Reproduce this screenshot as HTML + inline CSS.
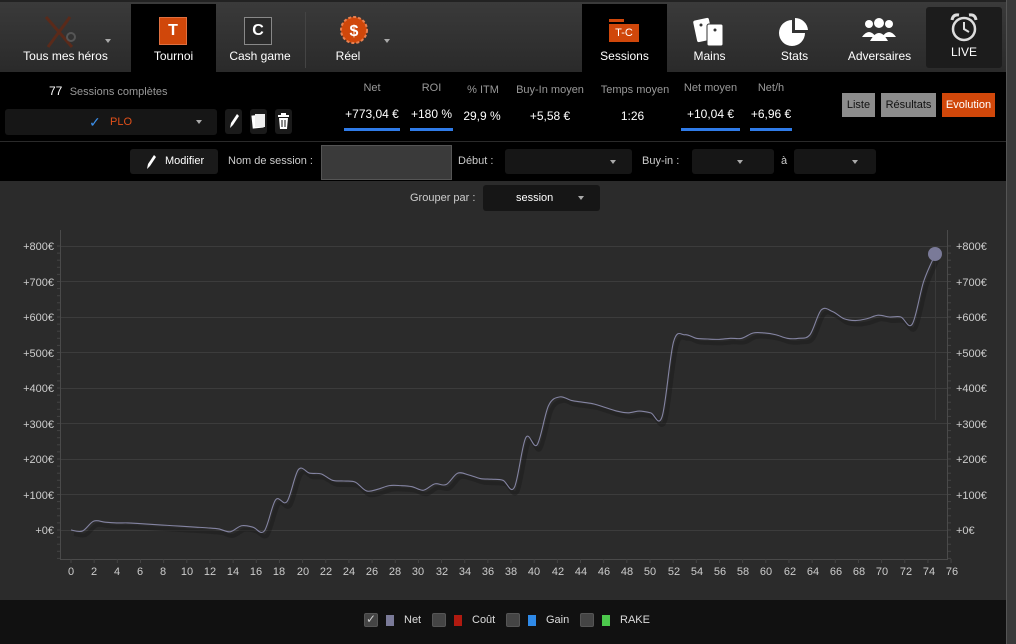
<!DOCTYPE html>
<html><head><meta charset="utf-8"><style>
*{margin:0;padding:0;box-sizing:border-box}
body{width:1016px;height:644px;overflow:hidden;background:#2b2b2b;font-family:"Liberation Sans",sans-serif;font-size:12px;color:#ddd;position:relative}
.a{position:absolute}
.nav{left:0;top:0;width:1006px;height:72px;background:linear-gradient(#3a3a3a,#2a2a2a);border-top:2px solid #222}
.tab{position:absolute;top:2px;height:70px;text-align:center;color:#fff;font-size:12px}
.tab .l{position:absolute;bottom:11px;left:0;right:0}
.blk{background:#000}
.dd{position:absolute;width:0;height:0;border-left:3px solid transparent;border-right:3px solid transparent;border-top:4px solid #aaa}
.stats{left:0;top:72px;width:1006px;height:69px;background:#000}
.filt{left:0;top:141px;width:1006px;height:40px;background:#000;border-top:1px solid #2a2a2a}
.h{position:absolute;color:#999;font-size:11px;text-align:center}
.v{position:absolute;color:#fff;font-size:12px;text-align:center}
.bar{position:absolute;height:3px;background:#2f7be8}
.sel{position:absolute;background:#161616;border-radius:3px}
.btn{position:absolute;top:93px;height:24px;line-height:24px;font-size:11px;color:#111;background:#8c8c8c;text-align:center}
.leg{left:0;top:600px;width:1006px;height:44px;background:#111}
.cb{position:absolute;top:613px;width:14px;height:14px;background:#444;border:1px solid #555;border-radius:2px}
.sw{position:absolute;top:615px;width:8px;height:11px}
.lt{position:absolute;top:614px;font-size:11px;color:#ddd}
</style></head><body>
<div class="a" style="left:1006px;top:0;width:10px;height:644px;background:#3a3a3a;border-left:1px solid #555"></div>
<div class="a nav">
 <div class="tab" style="left:0;width:131px">
  <svg class="a" style="left:44px;top:11px" width="32" height="34" viewBox="0 0 32 34"><path d="M2 2 L28 32 M26 2 L4 32" stroke="#5a2a1a" stroke-width="3"/><circle cx="27" cy="22" r="4" fill="none" stroke="#555" stroke-width="2"/></svg>
  <div class="dd" style="left:105px;top:35px"></div><div class="l">Tous mes héros</div></div>
 <div class="tab blk" style="left:131px;width:85px">
  <div class="a" style="left:28px;top:13px;width:28px;height:28px;background:#d0470a;border:1px solid #e07040;color:#fff;font-weight:bold;font-size:16px;line-height:26px">T</div><div class="l">Tournoi</div></div>
 <div class="tab" style="left:216px;width:88px">
  <div class="a" style="left:28px;top:13px;width:28px;height:28px;background:#2a2a2a;border:1px solid #888;color:#fff;font-weight:bold;font-size:16px;line-height:26px">C</div><div class="l">Cash game</div></div>
 <div class="a" style="left:305px;top:10px;width:1px;height:56px;background:#444"></div>
 <div class="tab" style="left:306px;width:100px">
  <svg class="a" style="left:34px;top:12px" width="28" height="28"><circle cx="14" cy="14" r="13" fill="#d0470a" stroke="#e88050" stroke-dasharray="3 2" stroke-width="2"/><text x="14" y="20" text-anchor="middle" fill="#fff" font-size="16" font-weight="bold" font-family="Liberation Sans">$</text></svg>
  <div class="dd" style="left:78px;top:35px"></div><div class="l" style="left:-8px;right:auto;width:100px">Réel</div></div>
 <div class="tab blk" style="left:582px;width:85px">
  <div class="a" style="left:27px;top:15px;width:15px;height:3px;background:#d0470a"></div>
  <div class="a" style="left:27px;top:20px;width:30px;height:18px;background:#d0470a;color:#fff;font-size:11px;line-height:18px">T-C</div><div class="l">Sessions</div></div>
 <div class="tab" style="left:667px;width:85px">
  <svg class="a" style="left:26px;top:12px" width="34" height="32"><rect x="2" y="3" width="16" height="22" rx="2" fill="#fff" transform="rotate(-12 10 14)"/><rect x="14" y="8" width="16" height="22" rx="2" fill="#fff" stroke="#333"/><circle cx="8" cy="9" r="1.5" fill="#333"/><circle cx="22" cy="14" r="1.5" fill="#333"/></svg>
  <div class="l">Mains</div></div>
 <div class="tab" style="left:752px;width:85px">
  <svg class="a" style="left:26px;top:12px" width="32" height="32"><path d="M14 4 A13 13 0 1 0 27 17 L14 17 Z" fill="#fff"/><path d="M17 2 A13 13 0 0 1 30 14 L17 14 Z" fill="#fff"/></svg>
  <div class="l">Stats</div></div>
 <div class="tab" style="left:837px;width:85px">
  <svg class="a" style="left:24px;top:13px" width="36" height="26"><circle cx="8" cy="7" r="4" fill="#fff"/><circle cx="28" cy="7" r="4" fill="#fff"/><circle cx="18" cy="6" r="5" fill="#fff"/><path d="M1 20 Q8 10 15 20 Z M21 20 Q28 10 35 20 Z" fill="#fff"/><path d="M9 24 Q18 8 27 24 Z" fill="#fff"/></svg>
  <div class="l">Adversaires</div></div>
 <div class="tab" style="left:926px;top:5px;width:76px;height:61px;background:#1c1c1c;border-radius:3px">
  <svg class="a" style="left:23px;top:5px" width="30" height="30"><circle cx="15" cy="17" r="11" fill="none" stroke="#ddd" stroke-width="2.5"/><path d="M15 10 V17 L20 20" stroke="#ddd" stroke-width="2" fill="none"/><path d="M3 8 Q4 2 10 3 M27 8 Q26 2 20 3" stroke="#ddd" stroke-width="3" fill="none"/></svg>
  <div class="l" style="bottom:9px">LIVE</div></div>
</div>

<div class="a stats">
 <div class="a" style="left:49px;top:12px;font-size:12px;color:#fff">77 <span style="color:#999;font-size:11px;margin-left:4px">Sessions complètes</span></div>
 <div class="sel" style="left:5px;top:37px;width:212px;height:26px"><span class="a" style="left:84px;top:5px;color:#3b8ee8;font-size:14px">✓</span><span class="a" style="left:105px;top:7px;color:#e0501a;font-size:11px">PLO</span><div class="dd" style="left:191px;top:11px"></div></div>
 <div class="sel" style="left:225px;top:37px;width:17px;height:25px;background:#1a1a1a"><svg width="17" height="25"><path d="M5 19 L6 14 L12 5 L14 7 L8 16 Z" fill="#fff"/></svg></div>
 <div class="sel" style="left:250px;top:37px;width:17px;height:25px;background:#1a1a1a"><svg width="17" height="25"><rect x="2" y="6" width="11" height="13" fill="#fff" transform="rotate(-6 8 12)"/><rect x="5" y="5" width="10" height="13" fill="#eee"/></svg></div>
 <div class="sel" style="left:275px;top:37px;width:17px;height:25px;background:#1a1a1a"><svg width="17" height="25"><rect x="3" y="6" width="11" height="2" fill="#fff"/><rect x="6" y="4" width="5" height="2" fill="#fff"/><path d="M4 9 H13 L12 20 H5 Z" fill="#fff"/><path d="M7 11 V18 M10 11 V18" stroke="#111"/></svg></div>
 <div class="h" style="left:344px;top:10px;width:56px">Net</div><div class="v" style="left:340px;top:35px;width:64px">+773,04 €</div><div class="bar" style="left:344px;top:56px;width:56px"></div>
 <div class="h" style="left:410px;top:10px;width:43px">ROI</div><div class="v" style="left:408px;top:35px;width:47px">+180 %</div><div class="bar" style="left:410px;top:56px;width:43px"></div>
 <div class="h" style="left:460px;top:12px;width:46px">% ITM</div><div class="v" style="left:458px;top:37px;width:48px">29,9 %</div>
 <div class="h" style="left:510px;top:12px;width:80px">Buy-In moyen</div><div class="v" style="left:510px;top:37px;width:80px">+5,58 €</div>
 <div class="h" style="left:595px;top:12px;width:80px">Temps moyen</div><div class="v" style="left:595px;top:37px;width:75px">1:26</div>
 <div class="h" style="left:681px;top:10px;width:59px">Net moyen</div><div class="v" style="left:681px;top:35px;width:59px">+10,04 €</div><div class="bar" style="left:681px;top:56px;width:59px"></div>
 <div class="h" style="left:750px;top:10px;width:42px">Net/h</div><div class="v" style="left:747px;top:35px;width:48px">+6,96 €</div><div class="bar" style="left:750px;top:56px;width:42px"></div>
</div>
<div class="btn" style="left:842px;width:33px">Liste</div>
<div class="btn" style="left:881px;width:55px">Résultats</div>
<div class="btn" style="left:942px;width:53px;background:#d0470a;color:#fff">Evolution</div>

<div class="a filt">
 <div class="sel" style="left:130px;top:7px;width:88px;height:25px;background:#1a1a1a"><svg class="a" style="left:14px;top:4px" width="14" height="18"><path d="M3 16 L4 11 L10 2 L12 4 L6 13 Z" fill="#fff"/></svg><span class="a" style="left:35px;top:6px;color:#fff;font-size:11px">Modifier</span></div>
 <div class="a" style="left:228px;top:13px;font-size:11px;color:#ccc">Nom de session :</div>
 <div class="a" style="left:321px;top:3px;width:131px;height:35px;background:#3a3a3a;border:1px solid #555"></div>
 <div class="a" style="left:458px;top:13px;font-size:11px;color:#ccc">Début :</div>
 <div class="sel" style="left:505px;top:7px;width:127px;height:25px;background:#161616"><div class="dd" style="left:105px;top:11px"></div></div>
 <div class="a" style="left:642px;top:13px;font-size:11px;color:#ccc">Buy-in :</div>
 <div class="sel" style="left:692px;top:7px;width:82px;height:25px;background:#161616"><div class="dd" style="left:45px;top:11px"></div></div>
 <div class="a" style="left:781px;top:13px;font-size:11px;color:#ccc">à</div>
 <div class="sel" style="left:794px;top:7px;width:82px;height:25px;background:#161616"><div class="dd" style="left:58px;top:11px"></div></div>
</div>
<div class="a" style="left:410px;top:192px;font-size:11px;color:#ccc">Grouper par :</div>
<div class="sel" style="left:483px;top:185px;width:117px;height:26px;background:#161616"><span class="a" style="left:33px;top:7px;color:#fff;font-size:11px">session</span><div class="dd" style="left:95px;top:11px"></div></div>

<svg class="a" style="left:0;top:181px" width="1006" height="419">
 <g transform="translate(0,-181)" font-family="Liberation Sans" font-size="11" fill="#ccc">
  <g stroke="#3c3c3c" stroke-width="1">
   <line x1="60" x2="948" y1="246.5" y2="246.5"/><line x1="60" x2="948" y1="281.5" y2="281.5"/><line x1="60" x2="948" y1="317.5" y2="317.5"/><line x1="60" x2="948" y1="352.5" y2="352.5"/><line x1="60" x2="948" y1="388.5" y2="388.5"/><line x1="60" x2="948" y1="423.5" y2="423.5"/><line x1="60" x2="948" y1="459.5" y2="459.5"/><line x1="60" x2="948" y1="494.5" y2="494.5"/><line x1="60" x2="948" y1="530.5" y2="530.5"/>
  </g>
  <line x1="60.5" y1="230" x2="60.5" y2="559" stroke="#4a4a4a"/>
  <line x1="947.5" y1="230" x2="947.5" y2="559" stroke="#4a4a4a"/>
  <line x1="60" y1="559.5" x2="948" y2="559.5" stroke="#4a4a4a"/>
  <g id="ticks" stroke="#444"></g>
  <g text-anchor="end">
   <text x="54" y="250">+800€</text><text x="54" y="286">+700€</text><text x="54" y="321">+600€</text><text x="54" y="357">+500€</text><text x="54" y="392">+400€</text><text x="54" y="428">+300€</text><text x="54" y="463">+200€</text><text x="54" y="499">+100€</text><text x="54" y="534">+0€</text>
  </g>
  <g>
   <text x="956" y="250">+800€</text><text x="956" y="286">+700€</text><text x="956" y="321">+600€</text><text x="956" y="357">+500€</text><text x="956" y="392">+400€</text><text x="956" y="428">+300€</text><text x="956" y="463">+200€</text><text x="956" y="499">+100€</text><text x="956" y="534">+0€</text>
  </g>
  <g text-anchor="middle">
   <text x="71" y="575">0</text><text x="94" y="575">2</text><text x="117" y="575">4</text><text x="140" y="575">6</text><text x="163" y="575">8</text><text x="187" y="575">10</text><text x="210" y="575">12</text><text x="233" y="575">14</text><text x="256" y="575">16</text><text x="279" y="575">18</text><text x="303" y="575">20</text><text x="326" y="575">22</text><text x="349" y="575">24</text><text x="372" y="575">26</text><text x="395" y="575">28</text><text x="418" y="575">30</text><text x="442" y="575">32</text><text x="465" y="575">34</text><text x="488" y="575">36</text><text x="511" y="575">38</text><text x="534" y="575">40</text><text x="558" y="575">42</text><text x="581" y="575">44</text><text x="604" y="575">46</text><text x="627" y="575">48</text><text x="650" y="575">50</text><text x="674" y="575">52</text><text x="697" y="575">54</text><text x="720" y="575">56</text><text x="743" y="575">58</text><text x="766" y="575">60</text><text x="790" y="575">62</text><text x="813" y="575">64</text><text x="836" y="575">66</text><text x="859" y="575">68</text><text x="882" y="575">70</text><text x="906" y="575">72</text><text x="929" y="575">74</text><text x="952" y="575">76</text>
  </g>
  <line x1="935.5" y1="254" x2="935.5" y2="420" stroke="#3a3a3a"/>
  <path id="sh" fill="none" stroke="#1c1c1c" stroke-width="4" opacity="0.5" transform="translate(3,4)"/>
  <path id="ln" fill="none" stroke="#8484a2" stroke-width="1.1"/>
  <circle cx="935" cy="254" r="7" fill="#7a7a98"/>
 </g>
</svg>

<div class="a leg"></div>
<div class="cb" style="left:364px"><span class="a" style="left:1px;top:-2px;color:#ccc;font-size:12px">✓</span></div>
<div class="sw" style="left:386px;background:#7a7a98"></div><div class="lt" style="left:404px">Net</div>
<div class="cb" style="left:432px"></div><div class="sw" style="left:454px;background:#b01a10"></div><div class="lt" style="left:472px">Coût</div>
<div class="cb" style="left:506px"></div><div class="sw" style="left:528px;background:#2f8ae8"></div><div class="lt" style="left:546px">Gain</div>
<div class="cb" style="left:580px"></div><div class="sw" style="left:602px;background:#4cc84c"></div><div class="lt" style="left:620px">RAKE</div>

<script>
var v=[0,-3,25,22,20,20,18,16,14,12,10,8,6,3,-5,12,8,-3,85,80,170,160,158,140,138,135,110,115,125,125,122,112,130,128,160,155,145,143,140,120,260,240,350,375,365,360,355,345,335,330,335,330,320,530,550,540,538,537,540,540,555,555,550,540,540,550,620,615,595,590,595,605,600,600,580,700,775];
var st=(935-71)/76;
var p=v.map(function(y,i){return [71+st*i,530-0.355*y]});
var d="M"+p[0][0]+" "+p[0][1];
for(var i=0;i<p.length-1;i++){var a=p[i-1]||p[i],b=p[i],c=p[i+1],e=p[i+2]||c;
d+=" C"+(b[0]+(c[0]-a[0])/6)+" "+(b[1]+(c[1]-a[1])/6)+" "+(c[0]-(e[0]-b[0])/6)+" "+(c[1]-(e[1]-b[1])/6)+" "+c[0]+" "+c[1];}
document.getElementById('ln').setAttribute('d',d);document.getElementById('sh').setAttribute('d',d);
var t="";for(var y=246;y<=559;y+=7.1){t+='<line x1="57" x2="60" y1="'+y+'" y2="'+y+'"/><line x1="948" x2="951" y1="'+y+'" y2="'+y+'"/>';}
for(var i=0;i<=76;i+=2){var x=71+11.58*i;t+='<line x1="'+x+'" x2="'+x+'" y1="559" y2="563"/>';}
document.getElementById('ticks').innerHTML=t;
</script>
</body></html>
